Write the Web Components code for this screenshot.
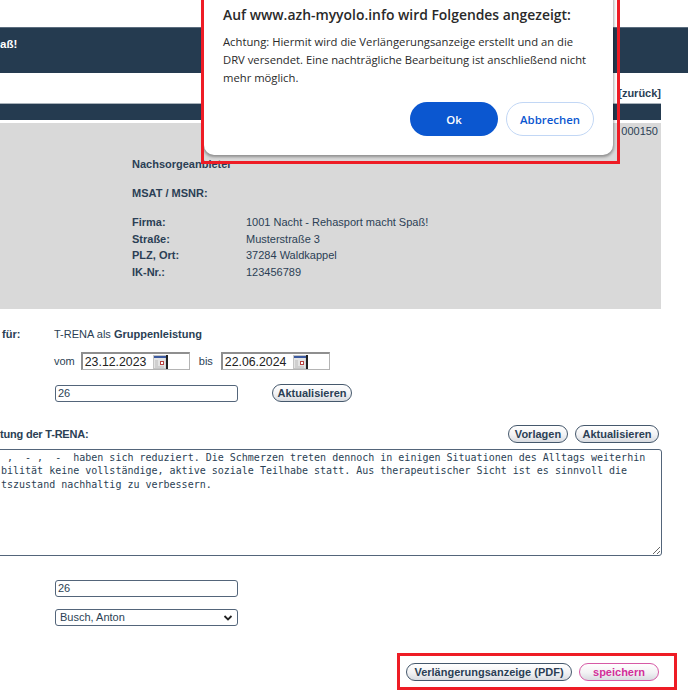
<!DOCTYPE html>
<html lang="de">
<head>
<meta charset="utf-8">
<title>Verlängerungsanzeige</title>
<style>
    html, body { margin: 0; padding: 0; background: #fff; }
    body { font-family: "Liberation Sans", Arial, sans-serif; font-size: 11px; color: #2b3f55; }
</style>
</head>
<body>

<azh-page>
    <azh-header>aß!</azh-header>
    <azh-backlink>[zurück]</azh-backlink>
    <azh-bar></azh-bar>

    <azh-panel number="000150">
        <azh-address label="Nachsorgeanbieter" gap="12.5"></azh-address>
        <azh-address label="MSAT / MSNR:" gap="12.5"></azh-address>
        <azh-address label="Firma:" gap="0">1001 Nacht - Rehasport macht Spaß!</azh-address>
        <azh-address label="Straße:" gap="0">Musterstraße 3</azh-address>
        <azh-address label="PLZ, Ort:" gap="0">37284 Waldkappel</azh-address>
        <azh-address label="IK-Nr.:" gap="0">123456789</azh-address>
    </azh-panel>

    <azh-form-row label="für:" top="17">T-RENA als <b>Gruppenleistung</b></azh-form-row>

    <azh-form-row top="9">
        <span style="margin-right:6px">vom</span><azh-date>23.12.2023</azh-date>
        <span style="margin:0 8px 0 9px">bis</span><azh-date>22.06.2024</azh-date>
    </azh-form-row>

    <azh-form-row top="14">
        <azh-input>26</azh-input>
        <azh-button width="80" style="margin-left:34px">Aktualisieren</azh-button>
    </azh-form-row>

    <azh-toolbar label="tung der T-RENA:">
        <azh-button width="60">Vorlagen</azh-button>
        <azh-button width="84">Aktualisieren</azh-button>
    </azh-toolbar>

    <azh-report> ,  - ,  -  haben sich reduziert. Die Schmerzen treten dennoch in einigen Situationen des Alltags weiterhin
bilität keine vollständige, aktive soziale Teilhabe statt. Aus therapeutischer Sicht ist es sinnvoll die
tszustand nachhaltig zu verbessern.</azh-report>

    <azh-form-row top="24"><azh-input>26</azh-input></azh-form-row>
    <azh-form-row top="12"><azh-select>Busch, Anton</azh-select></azh-form-row>

    <azh-actions>
        <azh-button width="166">Verlängerungsanzeige (PDF)</azh-button>
        <azh-button width="80" pink>speichern</azh-button>
    </azh-actions>

    <azh-dialog title="Auf www.azh-myyolo.info wird Folgendes angezeigt:">
        Achtung: Hiermit wird die Verlängerungsanzeige erstellt und an die DRV versendet. Eine nachträgliche Bearbeitung ist anschließend nicht mehr möglich.
    </azh-dialog>
    <azh-marker style="left:201px;top:-3px;width:419px;height:167px"></azh-marker>
    <azh-marker style="left:397px;top:653px;width:280px;height:37px"></azh-marker>
</azh-page>

<script>
// small helper so every element below only has to state its markup
class ShadowBase extends HTMLElement {
    constructor() {
        super();
        this.attachShadow({ mode: 'open' });
    }
    connectedCallback() {
        this.render();
    }
}

class AzhPage extends ShadowBase {
    render() {
        this.shadowRoot.innerHTML = `
            <style>
                :host {
                    display: block;
                    position: relative;
                    width: 688px;
                    height: 693px;
                    overflow: hidden;
                    padding-top: 27px;
                    box-sizing: border-box;
                }
            </style>
            <slot></slot>
        `;
    }
}

class AzhHeader extends ShadowBase {
    render() {
        this.shadowRoot.innerHTML = `
            <style>
                :host {
                    display: block;
                    height: 46px;
                    box-sizing: border-box;
                    padding-top: 9px;
                    background: #253b50;
                    border-top: 1px solid #5b6d7e;
                    color: #fff;
                    font: bold 11.5px "Liberation Sans", Arial, sans-serif;
                    line-height: 14px;
                }
            </style>
            <slot></slot>
        `;
    }
}

class AzhBacklink extends ShadowBase {
    render() {
        this.shadowRoot.innerHTML = `
            <style>
                :host {
                    display: block;
                    width: 661px;
                    height: 30px;
                    box-sizing: border-box;
                    padding-top: 13px;
                    text-align: right;
                    font-weight: bold;
                    font-size: 11px;
                    line-height: 14px;
                }
            </style>
            <slot></slot>
        `;
    }
}

class AzhBar extends ShadowBase {
    render() {
        this.shadowRoot.innerHTML = `
            <style>
                :host {
                    display: block;
                    width: 661px;
                    height: 17px;
                    box-sizing: border-box;
                    background: #253b50;
                    border-top: 1px solid #a9b2ba;
                }
            </style>
        `;
    }
}

class AzhPanel extends ShadowBase {
    render() {
        this.shadowRoot.innerHTML = `
            <style>
                :host {
                    display: block;
                    position: relative;
                    width: 661px;
                    height: 186px;
                    margin-top: 3px;
                    box-sizing: border-box;
                    padding: 33px 0 0 132px;
                    background: #d9d9d9;
                }
                .number {
                    position: absolute;
                    top: 1px;
                    right: 3px;
                    line-height: 14px;
                }
            </style>
            <span class="number">${this.getAttribute('number')}</span>
            <slot></slot>
        `;
    }
}

class AzhAddress extends ShadowBase {
    render() {
        this.shadowRoot.innerHTML = `
            <style>
                :host {
                    display: grid;
                    grid-template-columns: 114px 1fr;
                    line-height: 16.5px;
                    margin-bottom: ${this.getAttribute('gap')}px;
                }
                b { font-weight: bold; }
            </style>
            <b>${this.getAttribute('label')}</b>
            <span><slot></slot></span>
        `;
    }
}

class AzhFormRow extends ShadowBase {
    render() {
        const label = this.getAttribute('label') || '';
        this.shadowRoot.innerHTML = `
            <style>
                :host {
                    display: grid;
                    grid-template-columns: 54px 1fr;
                    align-items: center;
                    margin-top: ${this.getAttribute('top')}px;
                    line-height: 17px;
                }
                b { padding-left: 2px; font-weight: bold; }
                .value { display: flex; align-items: center; }
                .text { display: block; }
            </style>
            <b>${label}</b>
            <div class="${label ? 'text' : 'value'}"><slot></slot></div>
        `;
    }
}

class AzhDate extends ShadowBase {
    render() {
        this.shadowRoot.innerHTML = `
            <style>
                :host {
                    display: flex;
                    align-items: center;
                    width: 109px;
                    height: 18px;
                    box-sizing: border-box;
                    padding-left: 2px;
                    background: #fff;
                    border: 1px solid #b4b4b4;
                    border-top: 2px solid #8f8f8f;
                    border-left: 2px solid #8f8f8f;
                    color: #222;
                    font: 12.3px "Liberation Sans", Arial, sans-serif;
                }
                svg { margin-left: 7px; display: block; }
            </style>
            <slot></slot>
            <svg width="15" height="14" viewBox="0 0 15 14">
                <rect x="0.5" y="0.5" width="12.5" height="13" fill="#e4e4e4" stroke="#c4c4c4"/>
                <rect x="1" y="1" width="12" height="2" fill="#3c5aa0"/>
                <path d="M2 6h3M2 8h3M2 10h3M2 12h9" stroke="#bbb"/>
                <rect x="7.5" y="6.5" width="3" height="3" fill="#fff" stroke="#b8433f"/>
                <rect x="13" y="0" width="2" height="14" fill="#222"/>
            </svg>
        `;
    }
}

class AzhInput extends ShadowBase {
    render() {
        this.shadowRoot.innerHTML = `
            <style>
                :host {
                    display: inline-block;
                    vertical-align: middle;
                    width: 183px;
                    height: 17px;
                    box-sizing: border-box;
                    margin-left: 1px;
                    padding-left: 2px;
                    border: 1px solid #53657a;
                    border-radius: 3px;
                    background: #fff;
                    font-size: 11px;
                    line-height: 15px;
                }
            </style>
            <slot></slot>
        `;
    }
}

class AzhSelect extends ShadowBase {
    render() {
        this.shadowRoot.innerHTML = `
            <style>
                :host {
                    display: flex;
                    align-items: center;
                    justify-content: space-between;
                    width: 183px;
                    height: 17px;
                    box-sizing: border-box;
                    margin-left: 1px;
                    padding: 0 4px 0 4px;
                    border: 1px solid #53657a;
                    border-radius: 3px;
                    background: #fff;
                    font-size: 11px;
                }
            </style>
            <slot></slot>
            <svg width="10" height="6" viewBox="0 0 10 6"><path d="M1.5 1l3.5 3.5L8.500 1" fill="none" stroke="#222" stroke-width="1.800"/></svg>
        `;
    }
}

class AzhButton extends ShadowBase {
    render() {
        const pink = this.hasAttribute('pink');
        this.shadowRoot.innerHTML = `
            <style>
                :host {
                    display: inline-flex;
                    align-items: center;
                    justify-content: center;
                    width: ${this.getAttribute('width')}px;
                    height: 18px;
                    box-sizing: border-box;
                    border: 1.5px solid ${pink ? '#d65aa6' : '#45586c'};
                    border-radius: 9px;
                    background: linear-gradient(#ffffff, #f2f2f4 55%, #d8dbe0);
                    color: ${pink ? '#d3309a' : '#2b3f55'};
                    font: bold 11px "Liberation Sans", Arial, sans-serif;
                    white-space: nowrap;
                }
            </style>
            <slot></slot>
        `;
    }
}

class AzhToolbar extends ShadowBase {
    render() {
        this.shadowRoot.innerHTML = `
            <style>
                :host {
                    display: flex;
                    align-items: center;
                    justify-content: space-between;
                    width: 659px;
                    margin-top: 23px;
                    font-weight: bold;
                }
                .label { letter-spacing: -0.2px; }
                .buttons { display: flex; gap: 7px; }
            </style>
            <span class="label">${this.getAttribute('label')}</span>
            <div class="buttons"><slot></slot></div>
        `;
    }
}

class AzhReport extends ShadowBase {
    render() {
        const text = this.textContent;
        this.shadowRoot.innerHTML = `
            <style>
                :host {
                    display: block;
                    width: 672px;
                    height: 107px;
                    margin: 6px 0 0 -10px;
                }
                textarea {
                    display: block;
                    width: 100%;
                    height: 100%;
                    box-sizing: border-box;
                    margin: 0;
                    padding: 1px 0 0 10px;
                    border: 1px solid #53657a;
                    border-radius: 3px;
                    background: #fff;
                    color: #2b3f55;
                    font: 10px/13.4px "DejaVu Sans Mono", monospace;
                    white-space: pre;
                    overflow: hidden;
                    outline: none;
                }
            </style>
            <textarea wrap="off" spellcheck="false"></textarea>
        `;
        this.shadowRoot.querySelector('textarea').textContent = text;
    }
}

class AzhActions extends ShadowBase {
    render() {
        this.shadowRoot.innerHTML = `
            <style>
                :host {
                    display: flex;
                    justify-content: flex-end;
                    gap: 7px;
                    width: 659px;
                    margin-top: 37px;
                }
            </style>
            <slot></slot>
        `;
    }
}

class AzhDialog extends ShadowBase {
    render() {
        this.shadowRoot.innerHTML = `
            <style>
                :host {
                    position: absolute;
                    left: 204px;
                    top: -10px;
                    width: 409px;
                    height: 165px;
                    box-sizing: border-box;
                    padding: 15px 19px 0;
                    background: #fff;
                    border-radius: 10px;
                    box-shadow: 0 1px 3px 1px rgba(0, 0, 0, 0.35);
                    font-family: "Open Sans", "Noto Sans", sans-serif;
                    color: #2a2a2a;
                }
                h1 {
                    margin: 0;
                    font-size: 13.9px;
                    font-weight: 600;
                    line-height: 20px;
                    white-space: nowrap;
                }
                p {
                    margin: 8px 0 0;
                    font-size: 11.25px;
                    line-height: 18px;
                }
                .buttons {
                    display: flex;
                    justify-content: flex-end;
                    gap: 8px;
                    margin-top: 15px;
                }
                .btn {
                    display: flex;
                    align-items: center;
                    justify-content: center;
                    width: 88px;
                    height: 34px;
                    box-sizing: border-box;
                    border-radius: 17px;
                    font-size: 11.4px;
                    font-weight: 600;
                }
                .ok { background: #0b57d0; color: #fff; }
                .cancel { border: 1px solid #c2d7f5; color: #0b57d0; background: #fff; }
            </style>
            <h1>${this.getAttribute('title')}</h1>
            <p><slot></slot></p>
            <div class="buttons">
                <div class="btn ok">Ok</div>
                <div class="btn cancel">Abbrechen</div>
            </div>
        `;
    }
}

// red annotation frame drawn over the screenshot
class AzhMarker extends ShadowBase {
    render() {
        this.shadowRoot.innerHTML = `
            <style>
                :host {
                    position: absolute;
                    box-sizing: border-box;
                    border: 3px solid #ee1c25;
                    pointer-events: none;
                }
            </style>
        `;
    }
}

customElements.define('azh-page', AzhPage);
customElements.define('azh-header', AzhHeader);
customElements.define('azh-backlink', AzhBacklink);
customElements.define('azh-bar', AzhBar);
customElements.define('azh-panel', AzhPanel);
customElements.define('azh-address', AzhAddress);
customElements.define('azh-form-row', AzhFormRow);
customElements.define('azh-date', AzhDate);
customElements.define('azh-input', AzhInput);
customElements.define('azh-select', AzhSelect);
customElements.define('azh-button', AzhButton);
customElements.define('azh-toolbar', AzhToolbar);
customElements.define('azh-report', AzhReport);
customElements.define('azh-actions', AzhActions);
customElements.define('azh-dialog', AzhDialog);
customElements.define('azh-marker', AzhMarker);
</script>
</body>
</html>
